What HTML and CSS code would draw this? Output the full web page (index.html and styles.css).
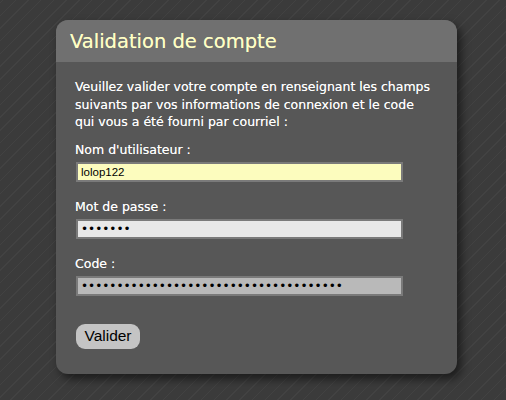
FILE: index.html
```html
<!DOCTYPE html>
<html lang="fr">
<head>
    <meta charset="UTF-8">
    <title>Validation de compte</title>
    <link rel="stylesheet" href="styles.css">
</head>
<body>

    <!-- Carte de validation -->
    <div class="card">
        <div class="card-header">Validation de compte</div>
        <form class="card-body">
            <p class="intro">Veuillez valider votre compte en renseignant les champs suivants par vos informations de connexion et le code qui vous a été fourni par courriel :</p>

            <label class="field">
                <span>Nom d'utilisateur :</span>
                <input type="text" class="input input-user" value="lolop122">
            </label>

            <label class="field">
                <span>Mot de passe :</span>
                <input type="password" class="input input-pass" value="1234567">
            </label>

            <label class="field">
                <span>Code :</span>
                <input type="password" class="input input-code" value="abcdefghijabcdefghijabcdefghijabcdefg">
            </label>

            <button type="button" class="btn">Valider</button>
        </form>
    </div>

</body>
</html>
```

FILE: styles.css
```css
* {
    margin: 0;
    padding: 0;
    box-sizing: border-box;
}

body {
    height: 400px;
    overflow: hidden;
    padding: 20px 0 0 56px;
    font-family: "DejaVu Sans", Verdana, sans-serif;
    background-color: #3b3b3b;
    background-image: repeating-linear-gradient(-45deg, #3b3b3b 0, #3b3b3b 8px, #424242 8px, #424242 9px);
    color: white;
}

.card {
    width: 401px;
    border-radius: 12px;
    overflow: hidden;
    background: #575757;
    box-shadow: 4px 5px 10px rgba(0, 0, 0, 0.55);
}

.card-header {
    height: 42px;
    padding: 10px 0 0 14px;
    background: #707070;
    color: #ffffc4;
    font-size: 19.5px;
    text-shadow: 0 0 0.6px rgba(255, 255, 196, 0.7);
}

.card-body {
    display: flex;
    flex-direction: column;
    padding: 16px 20px 25px 19px;
    text-shadow: 0 0 0.6px rgba(255, 255, 255, 0.7);
}

.intro {
    font-size: 12.5px;
    line-height: 17.5px;
    margin-bottom: 11px;
}

.field {
    display: flex;
    flex-direction: column;
    gap: 5px;
    font-size: 12.5px;
    line-height: 15px;
    margin-bottom: 17px;
}

.input {
    width: 327px;
    height: 20px;
    margin-left: 1px;
    padding: 0 3px;
    border: 2px solid #7a7a7a;
    font-family: "Liberation Sans", Arial, sans-serif;
    font-size: 11.5px;
    color: black;
    outline: none;
    text-shadow: none;
}

.input-user {
    background: #fcfcbe;
}

.input-pass {
    background: #e8e8e8;
}

.input-code {
    background: #b9b9b9;
}

.input-pass,
.input-code {
    font-family: "DejaVu Sans", Verdana, sans-serif;
    font-size: 12px;
}

.btn {
    align-self: flex-start;
    margin: 11px 0 0 1px;
    width: 64px;
    height: 25px;
    border: none;
    border-radius: 9px;
    background: #c4c4c4;
    color: black;
    font-family: "Liberation Sans", Arial, sans-serif;
    font-size: 15.5px;
    text-shadow: none;
}
```
